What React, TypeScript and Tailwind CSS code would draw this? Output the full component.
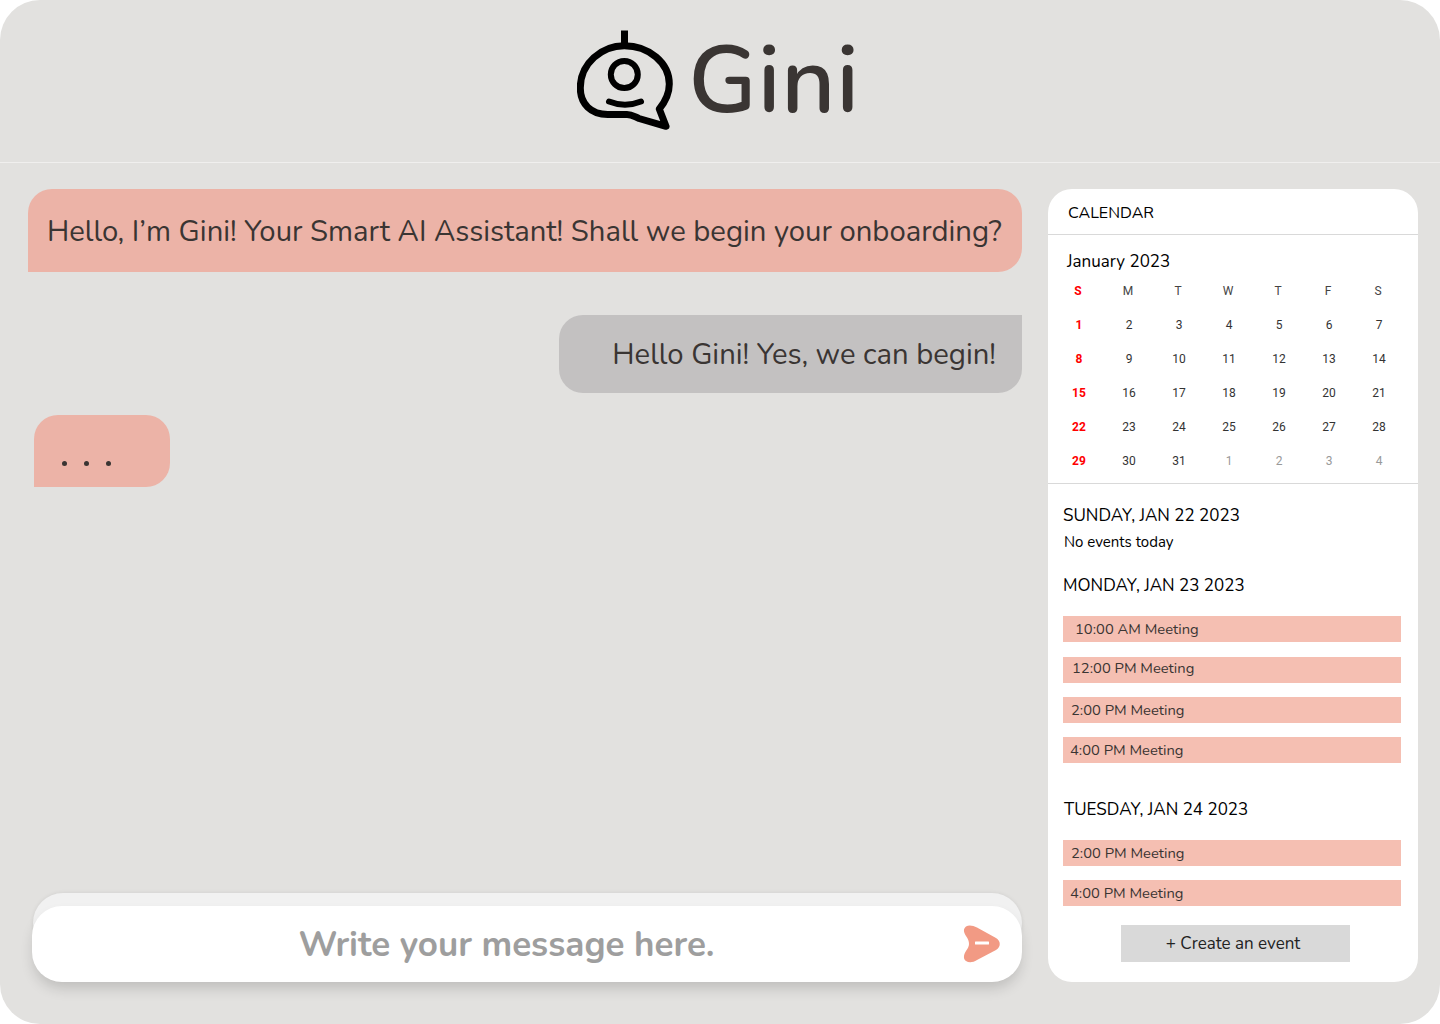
const weeks = [
  ["1","2","3","4","5","6","7"],
  ["8","9","10","11","12","13","14"],
  ["15","16","17","18","19","20","21"],
  ["22","23","24","25","26","27","28"],
  ["29","30","31","1","2","3","4"],
];
const days = ["S","M","T","W","T","F","S"];

function Logo() {
  return (
    <svg width="100" height="102" viewBox="0 0 100 102" fill="none" stroke="#000" strokeWidth="7" strokeLinecap="round" strokeLinejoin="round">
      <path d="M47.5 0.5V15" strokeLinecap="butt" />
      <path d="M47.3 15.7C72 15.7 92.3 33 92.3 54C92.3 64 88 72 82.3 79L89 96.3L62 88.5C58 87 55 84.5 50 84.5H30.7C14 84.5 3.3 74 3.3 58C3.3 33 25 15.7 47.3 15.7Z" />
      <circle cx="47.3" cy="44.5" r="13.5" strokeWidth="6" />
      <path d="M32 71.5C42 75.5 54 75.5 64 71.5" strokeWidth="6" />
    </svg>
  );
}

function Meeting({ label, pl, mt, extra = "" }: { label: string; pl: string; mt: string; extra?: string }) {
  return (
    <div className={`h-[26px] w-[338px] ml-[15px] bg-[#f5bfb2] flex items-center text-[14.75px] text-[#3a3533] ${pl} ${mt} ${extra}`}>{label}</div>
  );
}

export default function App() {
  return (
    <div className="w-[1440px] h-[1024px] bg-white overflow-hidden font-['Nunito','Noto_Sans',sans-serif]">
      <div className="w-full h-full bg-[#e2e1df] rounded-[40px] flex flex-col">
        <header className="h-[163px] shrink-0 border-b border-[#f0efee] flex items-start justify-center pt-[30px] pr-[3px]">
          <Logo />
          <span className="text-[#3a3533] text-[94px] leading-[94px] ml-[11px] mt-[4px] font-semibold tracking-[0.8px]">Gini</span>
        </header>
        <main className="flex-1 flex pl-[28px] pr-[22px] pt-[26px] pb-[42px] gap-[26px]">
          <section className="w-[994px] flex flex-col">
            <div className="h-[83px] bg-[#ecb3a7] rounded-tl-[24px] rounded-tr-[24px] rounded-br-[24px] flex items-center pl-[19px] pt-[2px] text-[29.25px] text-[#3a3533] whitespace-nowrap">
              Hello, I’m Gini! Your Smart AI Assistant! Shall we begin your onboarding?
            </div>
            <div className="self-end mt-[43px] h-[78px] w-[463px] bg-[#c3c1c1] rounded-tl-[24px] rounded-bl-[24px] rounded-br-[24px] flex items-center justify-end pr-[26px] pt-[2px] text-[29.25px] text-[#3a3533] whitespace-nowrap">
              Hello Gini! Yes, we can begin!
            </div>
            <div className="ml-[6px] mt-[22px] h-[72px] w-[136px] bg-[#ecb3a7] rounded-tl-[24px] rounded-tr-[24px] rounded-br-[24px] flex items-start gap-[17px] pl-[28px] pt-[46px]">
              <span className="w-[5px] h-[5px] rounded-full bg-[#3a3533]" />
              <span className="w-[5px] h-[5px] rounded-full bg-[#3a3533]" />
              <span className="w-[5px] h-[5px] rounded-full bg-[#3a3533]" />
            </div>
            <div className="mt-auto relative h-[89px] ml-[4px]">
              <div className="absolute left-[1px] right-0 top-0 h-[60px] rounded-[30px] bg-[#f1f1f1] shadow-[0_0_4px_rgba(0,0,0,0.08)]" />
              <div className="absolute left-0 right-0 top-[13px] h-[76px] rounded-[30px] bg-white shadow-[0_8px_14px_-2px_rgba(0,0,0,0.16)] flex items-center">
                <span className="flex-1 text-center pr-[41px] pt-[2px] text-[35px] font-bold text-[#9e9e9e]">Write your message here.</span>
                <svg className="absolute left-[931px] top-[19px]" width="38" height="38" viewBox="0 0 38 38">
                  <path d="M3 1.5C6 -0.5 10 0.5 14 2.5L33 13C38 16 38 22 33 25L14 35C10 37.5 6 38 3 36C0 34 0.5 30 3 26C5 23 6 21 6 19C6 16 5 14 3 11C0.5 7 0 4 3 1.5Z" fill="#f29a84" />
                  <rect x="12" y="16.5" width="14" height="3" fill="#fff" rx="0.5" />
                </svg>
              </div>
            </div>
          </section>
          <aside className="w-[370px] bg-white rounded-[24px] flex flex-col text-black">
            <div className="h-[46px] border-b border-[#d9d9d9] flex items-center pl-[20px] text-[16px] pt-[3px]">CALENDAR</div>
            <div className="pl-[19px] pt-[16px] text-[17px] leading-[22px]">January 2023</div>
            <div className="grid grid-cols-7 w-[350px] ml-[5px] font-['Roboto',sans-serif] text-[12px] mt-[3px]">
              {days.map((d, i) => (
                <div key={i} className={`h-[34px] flex items-start pt-[6px] justify-center ${i === 0 ? "text-[#ff0000] font-bold" : "text-[#444]"}`}>{d}</div>
              ))}
              {weeks.flatMap((w, r) => w.map((d, i) => (
                <div key={`${r}-${i}`} className={`h-[34px] flex items-start pt-[6px] justify-center pl-[2px] ${i === 0 ? "text-[#ff0000] font-bold" : r === 4 && i > 2 ? "text-[#999]" : "text-[#333]"}`}>{d}</div>
              )))}
            </div>
            <div className="border-t border-[#d9d9d9] mt-[3px] pt-[20px] flex flex-col">
              <div className="pl-[15px] text-[17px] leading-[24px]">SUNDAY, JAN 22 2023</div>
              <div className="pl-[16px] text-[15px] leading-[20px] mt-[4px]">No events today</div>
              <div className="pl-[15px] text-[17px] leading-[24px] mt-[22px]">MONDAY, JAN 23 2023</div>
              <Meeting label="10:00 AM Meeting" pl="pl-[12px]" mt="mt-[18px]" />
              <Meeting label="12:00 PM Meeting" pl="pl-[9px]" mt="mt-[15px]" extra="pb-[4px]" />
              <Meeting label="2:00 PM Meeting" pl="pl-[8px]" mt="mt-[14px]" />
              <Meeting label="4:00 PM Meeting" pl="pl-[7px]" mt="mt-[14px]" />
              <div className="pl-[16px] text-[17px] leading-[24px] mt-[35px]">TUESDAY, JAN 24 2023</div>
              <Meeting label="2:00 PM Meeting" pl="pl-[8px]" mt="mt-[18px]" />
              <Meeting label="4:00 PM Meeting" pl="pl-[7px]" mt="mt-[14px]" />
              <div className="self-start ml-[73px] mt-[19px] w-[229px] h-[37px] bg-[#d9d9d9] flex items-center justify-center pr-[5px] text-[17px] text-[#222]">+ Create an event</div>
            </div>
          </aside>
        </main>
      </div>
    </div>
  );
}
